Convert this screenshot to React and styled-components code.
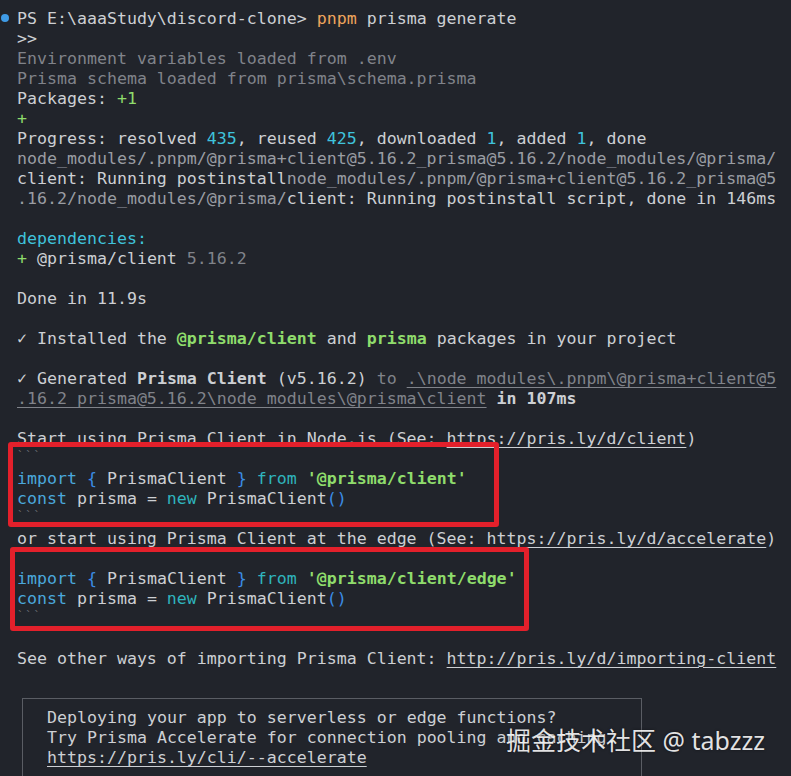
import React from "react";
import styled, { createGlobalStyle } from "styled-components";

const GlobalStyle = createGlobalStyle`
  html, body {
    margin: 0;
    padding: 0;
    background: #21242b;
  }
`;

const tones = {
  text: "#cdd0d4",
  dim: "#80838a",
  soft: "#9a9da3",
  green: "#8fdc6c",
  cyan: "#3fc3dc",
  orange: "#efa55c",
  kw: "#4aa8dc",
  brace: "#3b8de6",
  teal: "#2fb4bd",
};

const Screen = styled.div`
  position: relative;
  width: 791px;
  height: 776px;
  overflow: hidden;
  box-sizing: border-box;
  padding: 9px 0 0 17px;
  background: #21242b;
  font-family: "DejaVu Sans Mono", "Liberation Mono", monospace;
  font-size: 16.6px;
  color: ${tones.text};
`;

const Line = styled.div`
  position: relative;
  height: 20px;
  line-height: 20px;
  white-space: pre;
`;

const Span = styled.span`
  color: ${(p) => tones[p.$tone || "text"]};
  font-weight: ${(p) => (p.$bold ? 700 : 400)};
  text-decoration: ${(p) => (p.$link ? "underline" : "none")};
  text-underline-offset: 3px;
  text-decoration-thickness: 1px;
`;

const Check = styled.span`
  font-weight: 700;
`;

const Fence = styled.span`
  color: #6c6f76;
  font-size: 11px;
  letter-spacing: 1.6px;
  vertical-align: top;
  line-height: 14px;
`;

const Dot = styled.span`
  position: absolute;
  left: -16px;
  top: 5px;
  width: 8px;
  height: 8px;
  border-radius: 50%;
  background: #3f9be6;
`;

const Highlight = styled.div`
  position: absolute;
  left: ${(p) => p.$left}px;
  top: ${(p) => p.$top}px;
  width: ${(p) => p.$width}px;
  height: ${(p) => p.$height}px;
  box-sizing: border-box;
  border: 5px solid #e3202b;
  border-radius: 3px;
  pointer-events: none;
`;

const Panel = styled.div`
  margin: 29px 0 0 5px;
  width: 620px;
  height: 120px;
  box-sizing: border-box;
  border: 1px solid #5a5d64;
  padding: 9px 0 0 24px;
`;

const Watermark = styled.div`
  position: absolute;
  left: 506px;
  top: 723px;
  font-family: "Noto Sans", "Noto Sans CJK SC", sans-serif;
  font-size: 25px;
  line-height: 34px;
  color: rgba(255, 255, 255, 0.88);
  text-shadow: 0 0 3px rgba(0, 0, 0, 0.45);
  white-space: pre;
`;

const Blank = () => <Line> </Line>;

const CodeBlock = ({ path }) => (
  <>
    <Line>
      <Fence>```</Fence>
    </Line>
    <Line>
      <Span $tone="kw">import</Span> <Span $tone="brace">{"{"}</Span> PrismaClient{" "}
      <Span $tone="brace">{"}"}</Span> <Span $tone="teal">from</Span>{" "}
      <Span $tone="green" $bold>
        '{path}'
      </Span>
    </Line>
    <Line>
      <Span $tone="kw">const</Span> prisma = <Span $tone="teal">new</Span> PrismaClient
      <Span $tone="brace">()</Span>
    </Line>
    <Line>
      <Fence>```</Fence>
    </Line>
  </>
);

export default function App() {
  return (
    <>
      <GlobalStyle />
      <Screen>
        <Line>
          <Dot />
          PS E:\aaaStudy\discord-clone&gt; <Span $tone="orange">pnpm</Span> prisma generate
        </Line>
        <Line>&gt;&gt;</Line>
        <Line>
          <Span $tone="dim">Environment variables loaded from .env</Span>
        </Line>
        <Line>
          <Span $tone="dim">Prisma schema loaded from prisma\schema.prisma</Span>
        </Line>
        <Line>
          Packages: <Span $tone="green">+1</Span>
        </Line>
        <Line>
          <Span $tone="green">+</Span>
        </Line>
        <Line>
          Progress: resolved <Span $tone="cyan">435</Span>, reused <Span $tone="cyan">425</Span>, downloaded{" "}
          <Span $tone="cyan">1</Span>, added <Span $tone="cyan">1</Span>, done
        </Line>
        <Line>
          <Span $tone="soft">node_modules/.pnpm/@prisma+client@5.16.2_prisma@5.16.2/node_modules/@prisma/</Span>
        </Line>
        <Line>
          client: Running postinstall
          <Span $tone="soft">node_modules/.pnpm/@prisma+client@5.16.2_prisma@5</Span>
        </Line>
        <Line>
          <Span $tone="soft">.16.2/node_modules/@prisma/</Span>client: Running postinstall script, done in 146ms
        </Line>
        <Blank />
        <Line>
          <Span $tone="cyan">dependencies:</Span>
        </Line>
        <Line>
          <Span $tone="green">+</Span> @prisma/client <Span $tone="dim">5.16.2</Span>
        </Line>
        <Blank />
        <Line>Done in 11.9s</Line>
        <Blank />
        <Line>
          <Check>✓</Check> Installed the <Span $tone="green" $bold>@prisma/client</Span> and{" "}
          <Span $tone="green" $bold>prisma</Span> packages in your project
        </Line>
        <Blank />
        <Line>
          <Check>✓</Check> Generated <Span $bold>Prisma Client</Span> (v5.16.2) <Span $tone="dim">to</Span>{" "}
          <Span $tone="dim" $link>.\node_modules\.pnpm\@prisma+client@5</Span>
        </Line>
        <Line>
          <Span $tone="dim" $link>.16.2_prisma@5.16.2\node_modules\@prisma\client</Span>{" "}
          <Span $bold>in 107ms</Span>
        </Line>
        <Blank />
        <Line>
          Start using Prisma Client in Node.js (See: <Span $link>https://pris.ly/d/client</Span>)
        </Line>
        <CodeBlock path="@prisma/client" />
        <Line>
          or start using Prisma Client at the edge (See: <Span $link>https://pris.ly/d/accelerate</Span>)
        </Line>
        <CodeBlock path="@prisma/client/edge" />
        <Blank />
        <Line>
          See other ways of importing Prisma Client: <Span $link>http://pris.ly/d/importing-client</Span>
        </Line>
        <Panel>
          <Line>Deploying your app to serverless or edge functions?</Line>
          <Line>Try Prisma Accelerate for connection pooling and caching.</Line>
          <Line>
            <Span $link>https://pris.ly/cli/--accelerate</Span>
          </Line>
        </Panel>

        <Highlight $left={8} $top={442} $width={491} $height={85} />
        <Highlight $left={10} $top={547} $width={519} $height={84} />
        <Watermark>掘金技术社区 @ tabzzz</Watermark>
      </Screen>
    </>
  );
}
